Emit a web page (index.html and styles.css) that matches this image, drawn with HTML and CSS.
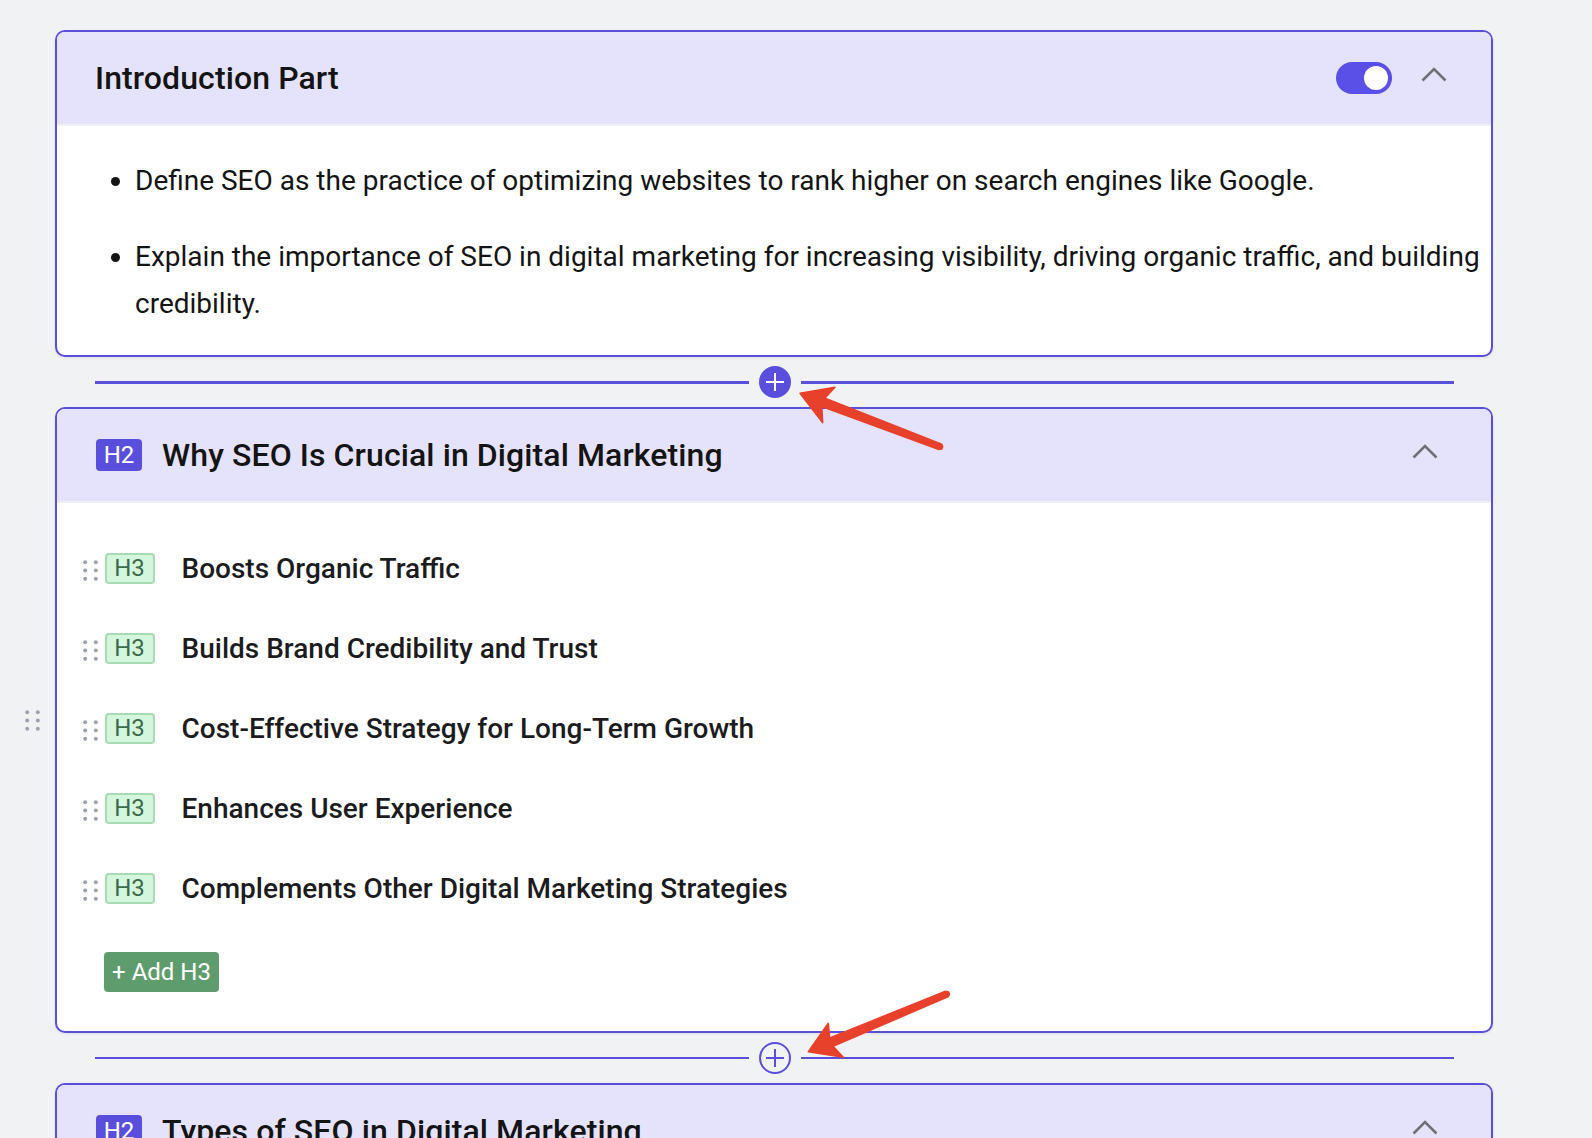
FILE: index.html
```html
<!DOCTYPE html>
<html lang="en">
<head>
<meta charset="utf-8">
<title>Outline</title>
<link rel="stylesheet" href="styles.css">
</head>
<body>
<div class="outline">

  <section class="section">
    <div class="side"></div>
    <div class="card">
      <header class="card-head">
        <h2 class="card-title">Introduction Part</h2>
        <span class="toggle"><span class="knob"></span></span>
        <svg class="chev chev-intro" width="26" height="15" viewBox="0 0 26 15"><polyline points="1.5,13.5 13,2 24.5,13.5" fill="none" stroke="#707074" stroke-width="2.6"/></svg>
      </header>
      <ul class="bullets">
        <li>Define SEO as the practice of optimizing websites to rank higher on search engines like Google.</li>
        <li>Explain the importance of SEO in digital marketing for increasing visibility, driving organic traffic, and building credibility.</li>
      </ul>
    </div>
  </section>

  <div class="sep active">
    <span class="sep-line"></span>
    <span class="sep-btn"><svg width="20" height="20" viewBox="0 0 20 20"><path d="M10 1V19M1 10H19" stroke="#fff" stroke-width="2"/></svg></span>
    <span class="sep-line"></span>
  </div>

  <section class="section">
    <div class="side">
      <svg class="grip-big" width="15" height="21" viewBox="0 0 15 21"><g fill="#9ca3af"><circle cx="2.2" cy="2.2" r="2"/><circle cx="12.8" cy="2.2" r="2"/><circle cx="2.2" cy="10.5" r="2"/><circle cx="12.8" cy="10.5" r="2"/><circle cx="2.2" cy="18.8" r="2"/><circle cx="12.8" cy="18.8" r="2"/></g></svg>
    </div>
    <div class="card">
      <header class="card-head h2-head">
        <span class="badge-h2">H2</span>
        <h2 class="card-title">Why SEO Is Crucial in Digital Marketing</h2>
        <svg class="chev" width="26" height="15" viewBox="0 0 26 15"><polyline points="1.5,13.5 13,2 24.5,13.5" fill="none" stroke="#707074" stroke-width="2.6"/></svg>
      </header>
      <div class="h3-list">
        <div class="h3-row">
          <svg class="grip" width="15" height="21" viewBox="0 0 15 21"><g fill="#9ca3af"><circle cx="2.2" cy="2.2" r="2"/><circle cx="12.8" cy="2.2" r="2"/><circle cx="2.2" cy="10.5" r="2"/><circle cx="12.8" cy="10.5" r="2"/><circle cx="2.2" cy="18.8" r="2"/><circle cx="12.8" cy="18.8" r="2"/></g></svg>
          <span class="badge-h3">H3</span>
          <span class="h3-text">Boosts Organic Traffic</span>
        </div>
        <div class="h3-row">
          <svg class="grip" width="15" height="21" viewBox="0 0 15 21"><g fill="#9ca3af"><circle cx="2.2" cy="2.2" r="2"/><circle cx="12.8" cy="2.2" r="2"/><circle cx="2.2" cy="10.5" r="2"/><circle cx="12.8" cy="10.5" r="2"/><circle cx="2.2" cy="18.8" r="2"/><circle cx="12.8" cy="18.8" r="2"/></g></svg>
          <span class="badge-h3">H3</span>
          <span class="h3-text">Builds Brand Credibility and Trust</span>
        </div>
        <div class="h3-row">
          <svg class="grip" width="15" height="21" viewBox="0 0 15 21"><g fill="#9ca3af"><circle cx="2.2" cy="2.2" r="2"/><circle cx="12.8" cy="2.2" r="2"/><circle cx="2.2" cy="10.5" r="2"/><circle cx="12.8" cy="10.5" r="2"/><circle cx="2.2" cy="18.8" r="2"/><circle cx="12.8" cy="18.8" r="2"/></g></svg>
          <span class="badge-h3">H3</span>
          <span class="h3-text">Cost-Effective Strategy for Long-Term Growth</span>
        </div>
        <div class="h3-row">
          <svg class="grip" width="15" height="21" viewBox="0 0 15 21"><g fill="#9ca3af"><circle cx="2.2" cy="2.2" r="2"/><circle cx="12.8" cy="2.2" r="2"/><circle cx="2.2" cy="10.5" r="2"/><circle cx="12.8" cy="10.5" r="2"/><circle cx="2.2" cy="18.8" r="2"/><circle cx="12.8" cy="18.8" r="2"/></g></svg>
          <span class="badge-h3">H3</span>
          <span class="h3-text">Enhances User Experience</span>
        </div>
        <div class="h3-row">
          <svg class="grip" width="15" height="21" viewBox="0 0 15 21"><g fill="#9ca3af"><circle cx="2.2" cy="2.2" r="2"/><circle cx="12.8" cy="2.2" r="2"/><circle cx="2.2" cy="10.5" r="2"/><circle cx="12.8" cy="10.5" r="2"/><circle cx="2.2" cy="18.8" r="2"/><circle cx="12.8" cy="18.8" r="2"/></g></svg>
          <span class="badge-h3">H3</span>
          <span class="h3-text">Complements Other Digital Marketing Strategies</span>
        </div>
        <button class="add-h3">+ Add H3</button>
      </div>
    </div>
  </section>

  <div class="sep">
    <span class="sep-line"></span>
    <span class="sep-btn"><svg width="20" height="20" viewBox="0 0 20 20"><path d="M10 1V19M1 10H19" stroke="#5a4fdc" stroke-width="2"/></svg></span>
    <span class="sep-line"></span>
  </div>

  <section class="section">
    <div class="side"></div>
    <div class="card">
      <header class="card-head h2-head">
        <span class="badge-h2">H2</span>
        <h2 class="card-title">Types of SEO in Digital Marketing</h2>
        <svg class="chev" width="26" height="15" viewBox="0 0 26 15"><polyline points="1.5,13.5 13,2 24.5,13.5" fill="none" stroke="#707074" stroke-width="2.6"/></svg>
      </header>
      <div class="h3-list">
        <div class="h3-row">
          <svg class="grip" width="15" height="21" viewBox="0 0 15 21"><g fill="#9ca3af"><circle cx="2.2" cy="2.2" r="2"/><circle cx="12.8" cy="2.2" r="2"/><circle cx="2.2" cy="10.5" r="2"/><circle cx="12.8" cy="10.5" r="2"/><circle cx="2.2" cy="18.8" r="2"/><circle cx="12.8" cy="18.8" r="2"/></g></svg>
          <span class="badge-h3">H3</span>
          <span class="h3-text">On-Page SEO</span>
        </div>
        <button class="add-h3">+ Add H3</button>
      </div>
    </div>
  </section>

</div>

<svg class="annotations" width="1592" height="1138" viewBox="0 0 1592 1138">
  <g fill="#e8412b" stroke="#e8412b" stroke-width="1.5" stroke-linejoin="round">
    <polygon points="800,393.3 835,387.3 825,398.1 941.1,443.9 938.9,449.5 821.8,406.5 822.7,422.7"/>
    <circle cx="940" cy="446.7" r="2.6"/>
    <polygon points="808.3,1051.7 828.3,1023.3 829.7,1037.9 945.5,991.2 947.9,996.8 833.1,1046.3 843.3,1057.3"/>
    <circle cx="946.7" cy="994" r="2.6"/>
  </g>
</svg>
</body>
</html>
```
FILE: styles.css
```css
* { box-sizing: border-box; }

body {
  margin: 0;
  background: #f1f2f4;
  font-family: Roboto, "Noto Sans", sans-serif;
  color: #141414;
  position: relative;
}

.outline {
  display: flex;
  flex-direction: column;
  padding: 30px 99px 40px 0;
}

.section {
  display: grid;
  grid-template-columns: 55px 1fr;
  align-items: center;
}

.side {
  display: flex;
  align-items: center;
  padding-left: 24.5px;
}

.card {
  border: 2px solid #5a4fdc;
  border-radius: 10px;
  background: #fff;
  overflow: hidden;
  box-shadow: 0 1px 3px rgba(0, 0, 0, 0.08);
}

.card-head {
  height: 94px;
  display: flex;
  align-items: center;
  padding: 0 44px 0 38px;
  background: #e5e3fb;
  border-bottom: 2px solid #eeeef3;
}

.h2-head {
  padding: 0 53px 0 39px;
}

.card-title {
  margin: 0;
  flex: 1;
  font-size: 32px;
  font-weight: 500;
  color: #141414;
  letter-spacing: 0.1px;
}

.toggle {
  width: 56px;
  height: 32px;
  border-radius: 16px;
  background: #5a4fe6;
  display: flex;
  align-items: center;
  justify-content: flex-end;
  padding-right: 4px;
}

.knob {
  width: 24px;
  height: 24px;
  border-radius: 50%;
  background: #fff;
}

.chev {
  display: block;
  margin-bottom: 7px;
}

.chev-intro {
  margin-left: 29px;
}

.bullets {
  margin: 0;
  padding: 31px 8px 28px 78px;
  font-size: 28px;
  line-height: 47px;
  color: #141414;
}

.bullets li + li {
  margin-top: 29px;
}

.badge-h2 {
  width: 46px;
  height: 32px;
  border-radius: 4px;
  background: #5a4fdc;
  color: #fff;
  font-size: 24px;
  display: flex;
  align-items: center;
  justify-content: center;
  margin-right: 20px;
}

.h3-list {
  display: flex;
  flex-direction: column;
  align-items: flex-start;
  padding: 25px 0 39px 25.5px;
}

.h3-row {
  height: 80px;
  display: flex;
  align-items: center;
}

.grip {
  display: block;
  margin-top: 4px;
  margin-right: 7px;
}

.badge-h3 {
  width: 50px;
  height: 31px;
  border-radius: 4px;
  background: #d4f6dc;
  border: 2px solid #a6dbb3;
  color: #3b6b4a;
  font-size: 24px;
  display: flex;
  align-items: center;
  justify-content: center;
  margin-right: 27px;
}

.h3-text {
  font-size: 28px;
  font-weight: 500;
  color: #1c1c1e;
}

.add-h3 {
  margin: 24px 0 0 21.5px;
  height: 40px;
  width: 115px;
  border: none;
  border-radius: 4px;
  background: #5e9c6d;
  color: #fff;
  font-family: Roboto, "Noto Sans", sans-serif;
  font-size: 24px;
  padding: 0;
}

.sep {
  height: 50px;
  margin-left: 55px;
  display: flex;
  align-items: center;
  gap: 10px;
  padding: 0 39px 0 40px;
}

.sep-line {
  flex: 1;
  height: 2px;
  background: #5a4fdc;
}

.sep.active .sep-line {
  height: 3px;
}

.sep-btn {
  width: 32px;
  height: 32px;
  border-radius: 50%;
  border: 2px solid #5a4fdc;
  display: flex;
  align-items: center;
  justify-content: center;
}

.sep.active .sep-btn {
  background: #5a4fdc;
}

.annotations {
  position: absolute;
  top: 0;
  left: 0;
  pointer-events: none;
}
```
